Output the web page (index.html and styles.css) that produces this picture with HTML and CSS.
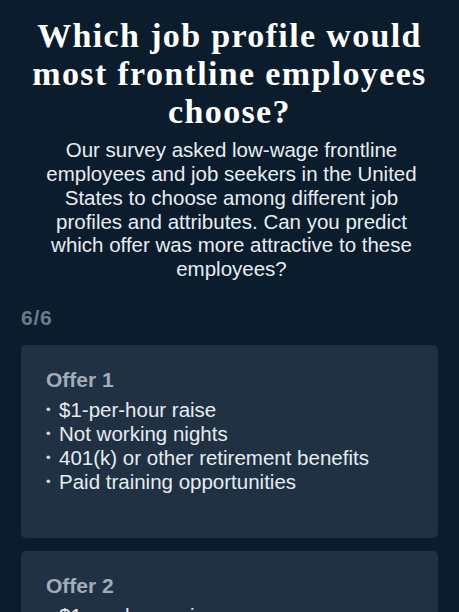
FILE: index.html
```html
<!DOCTYPE html>
<html lang="en">
<head>
  <meta charset="UTF-8" />
  <meta name="viewport" content="width=device-width, initial-scale=1.0"/>
  <title>Job profile quiz</title>
  <link rel="stylesheet" href="styles.css">
</head>
<body>
  <div class="quiz">
    <h1 class="quiz-title">Which job profile would most frontline employees choose?</h1>
    <p class="quiz-intro">Our survey asked low-wage frontline employees and job seekers in the United States to choose among different job profiles and attributes. Can you predict which offer was more attractive to these employees?</p>

    <div class="step">6/6</div>

    <div class="offers">
      <div class="offer">
        <h3>Offer 1</h3>
        <ul>
          <li>$1-per-hour raise</li>
          <li>Not working nights</li>
          <li>401(k) or other retirement benefits</li>
          <li>Paid training opportunities</li>
        </ul>
      </div>
      <div class="offer">
        <h3>Offer 2</h3>
        <ul>
          <li>$1-per-hour raise</li>
          <li>Flexible schedule</li>
          <li>Health insurance</li>
          <li>Career advancement</li>
        </ul>
      </div>
    </div>
  </div>
</body>
</html>
```

FILE: styles.css
```css
* {
  box-sizing: border-box;
  margin: 0;
  padding: 0;
}
body {
  background: #0b1c2d;
  color: #fff;
  font-family: 'Liberation Sans', Arial, sans-serif;
  overflow: hidden;
}
.quiz {
  padding: 17px 21px 0;
}
.quiz-title {
  font-family: 'Liberation Serif', 'Times New Roman', serif;
  font-weight: bold;
  font-size: 34px;
  line-height: 37.8px;
  letter-spacing: 1.35px;
  text-align: center;
}
.quiz-intro {
  margin-top: 8px;
  padding: 0 11px 0 15px;
  font-size: 20.5px;
  line-height: 23.7px;
  text-align: center;
  color: #e9edf1;
}
.step {
  margin-top: 25px;
  font-size: 21px;
  line-height: 24px;
  font-weight: bold;
  letter-spacing: 0.8px;
  color: #6c7b89;
}
.offers {
  margin-top: 15px;
  display: flex;
  flex-direction: column;
  gap: 13px;
}
.offer {
  background: #1f3143;
  border-radius: 5px;
  padding: 23px 25px 0;
  height: 193px;
}
.offer h3 {
  font-size: 21px;
  line-height: 24px;
  font-weight: bold;
  color: #a2adb8;
  margin-bottom: 6px;
}
.offer ul {
  list-style: none;
}
.offer li {
  font-size: 20.5px;
  line-height: 24px;
  color: #e8ecf0;
}
.offer li::before {
  content: "\2022";
  display: inline-block;
  width: 13px;
  font-size: 13px;
  line-height: 1;
  vertical-align: 3px;
  color: #d5dbe1;
}
```
